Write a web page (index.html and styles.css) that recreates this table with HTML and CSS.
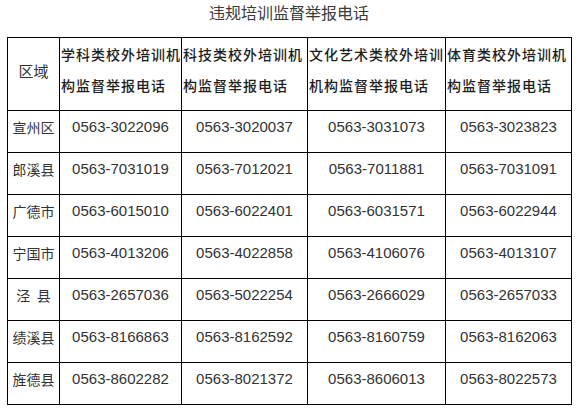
FILE: index.html
```html
<!DOCTYPE html>
<html lang="zh">
<head>
<meta charset="utf-8">
<title>违规培训监督举报电话</title>
<link rel="stylesheet" href="styles.css">
</head>
<body>
<div class="page">
  <h1 class="title">违规培训监督举报电话</h1>
  <table class="report">
    <colgroup>
      <col class="c-area">
      <col class="c-a">
      <col class="c-b">
      <col class="c-c">
      <col class="c-d">
    </colgroup>
    <thead>
      <tr>
        <th class="area-head">区域</th>
        <th>学科类校外培训机<br>构监督举报电话</th>
        <th>科技类校外培训机<br>构监督举报电话</th>
        <th>文化艺术类校外培训<br>机构监督举报电话</th>
        <th>体育类校外培训机<br>构监督举报电话</th>
      </tr>
    </thead>
    <tbody>
      <tr><td class="area">宣州区</td><td>0563-3022096</td><td>0563-3020037</td><td>0563-3031073</td><td>0563-3023823</td></tr>
      <tr><td class="area">郎溪县</td><td>0563-7031019</td><td>0563-7012021</td><td>0563-7011881</td><td>0563-7031091</td></tr>
      <tr><td class="area">广德市</td><td>0563-6015010</td><td>0563-6022401</td><td>0563-6031571</td><td>0563-6022944</td></tr>
      <tr><td class="area">宁国市</td><td>0563-4013206</td><td>0563-4022858</td><td>0563-4106076</td><td>0563-4013107</td></tr>
      <tr><td class="area">泾&nbsp;&nbsp;县</td><td>0563-2657036</td><td>0563-5022254</td><td>0563-2666029</td><td>0563-2657033</td></tr>
      <tr><td class="area">绩溪县</td><td>0563-8166863</td><td>0563-8162592</td><td>0563-8160759</td><td>0563-8162063</td></tr>
      <tr><td class="area">旌德县</td><td>0563-8602282</td><td>0563-8021372</td><td>0563-8606013</td><td>0563-8022573</td></tr>
    </tbody>
  </table>
</div>
</body>
</html>
```

FILE: styles.css
```css
html, body {
  margin: 0;
  padding: 0;
  background: #ffffff;
}

.page {
  padding: 0 0 0 7px;
  font-family: "Liberation Sans", "Noto Sans CJK SC", sans-serif;
  color: #333333;
}

.title {
  margin: 0;
  width: 564px;
  height: 37px;
  padding-top: 0;
  box-sizing: border-box;
  text-align: center;
  font-family: "Noto Sans CJK SC", sans-serif;
  font-size: 16px;
  font-weight: 400;
  line-height: 24px;
  color: #3a3a3a;
}

.report {
  border-collapse: collapse;
  table-layout: fixed;
  width: 564px;
}

.c-area { width: 52px; }
.c-a { width: 122px; }
.c-b { width: 126px; }
.c-c { width: 138px; }
.c-d { width: 126px; }

.report th,
.report td {
  border: 1px solid #000000;
}

.report th {
  height: 64px;
  padding: 0 0 8px 1px;
  text-align: left;
  vertical-align: middle;
  white-space: nowrap;
  font-family: "Noto Sans CJK SC", sans-serif;
  font-size: 14px;
  font-weight: 500;
  letter-spacing: 1px;
  line-height: 31px;
  color: #1e1e1e;
}

.report th.area-head {
  text-align: center;
  padding-left: 0;
  font-size: 15px;
  font-weight: 400;
  letter-spacing: 0;
  color: #333333;
}

.report td {
  height: 36px;
  padding: 5px 0 0 0;
  text-align: center;
  vertical-align: top;
  white-space: nowrap;
  font-size: 15px;
  line-height: 22px;
}

.report td.area {
  font-family: "Noto Sans CJK SC", sans-serif;
  font-size: 14px;
  letter-spacing: 0;
}
```
